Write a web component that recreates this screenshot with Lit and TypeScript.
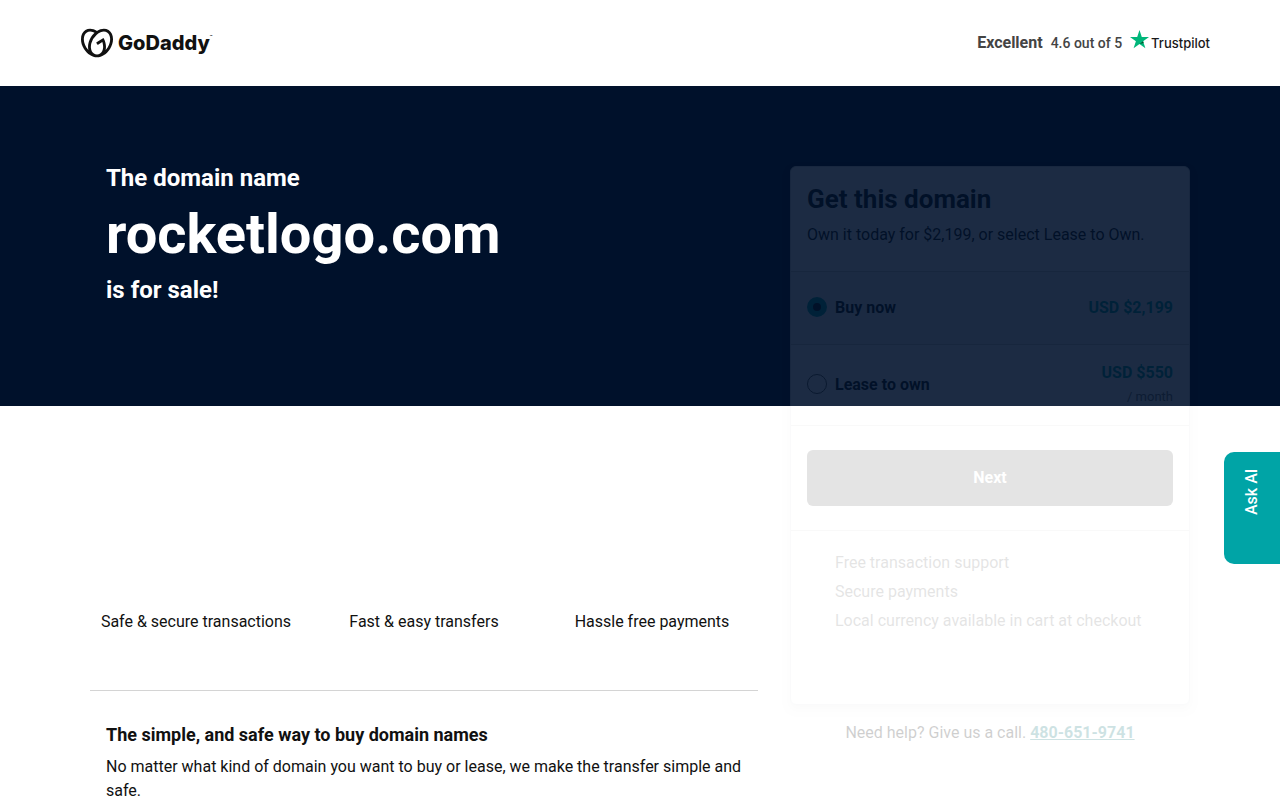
import { LitElement, html, css } from "lit";
import { customElement, state } from "lit/decorators.js";

@customElement("app-root")
export class AppRoot extends LitElement {
  @state() private plan = "buy";

  static styles = css`
    :host {
      display: block;
      font-family: Roboto, "Liberation Sans", sans-serif;
      font-size: 16px;
      line-height: 24px;
      color: #111;
      background: #fff;
    }
    * { box-sizing: border-box; }
    h1, h2, h3, p, ul, fieldset { margin: 0; padding: 0; border: 0; }
    ul { list-style: none; }

    .header {
      display: flex;
      justify-content: space-between;
      align-items: center;
      height: 86px;
      padding: 0 70px 0 81px;
    }
    .brand {
      display: flex;
      align-items: center;
      gap: 5px;
      color: #111;
      text-decoration: none;
    }
    .brand svg { display: block; width: 32px; height: 32px; }
    .wordmark {
      display: flex;
      font-family: Inter, sans-serif;
      font-weight: 800;
      font-size: 20px;
      line-height: 28px;
    }
    .tm { font-size: 4px; line-height: 16px; }
    .rating {
      display: flex;
      align-items: center;
      gap: 8px;
      color: #444;
    }
    .score { font-size: 14px; font-weight: 500; }
    .trust {
      display: flex;
      align-items: center;
      font-family: Inter, sans-serif;
      font-size: 13px;
      font-weight: 500;
      color: #191919;
      text-decoration: none;
    }
    .trust svg { display: block; width: 21px; height: 26px; }

    .main {
      background: linear-gradient(#00112b 320px, transparent 320px);
      padding: 80px 24px 0;
    }
    .columns {
      display: grid;
      grid-template-columns: minmax(0, 1fr) 400px;
      gap: 32px;
      max-width: 1100px;
      margin: 0 auto;
    }

    .hero {
      display: grid;
      gap: 8px;
      min-height: 240px;
      align-content: start;
      padding: 0 16px;
      color: #fff;
      font-weight: 700;
      font-size: 24px;
      line-height: 24px;
    }
    .domain { font-size: 56px; line-height: 72px; }
    .features {
      display: grid;
      grid-template-columns: repeat(3, 1fr);
      margin: 0 -8px;
      padding: 204px 0 56px;
      text-align: center;
    }
    .about {
      display: grid;
      gap: 8px;
      border-top: 1px solid #d4d4d4;
      padding: 32px 16px 24px;
    }
    .about h2 { font-size: 18px; line-height: 24px; }

    .card {
      border: 1px solid #d4dbe0;
      border-radius: 6px;
      background: #fff;
      box-shadow: 0 4px 8px rgba(0, 0, 0, 0.15);
      opacity: 0.11;
    }
    .intro { padding: 16px 16px 24px; }
    .intro h2 { font-size: 26px; line-height: 32px; margin-bottom: 8px; }
    .option {
      display: flex;
      align-items: center;
      gap: 8px;
      border-top: 1px solid #ccc;
      padding: 16px;
      min-height: 73px;
      font-weight: 700;
    }
    .option.picked { background: #f6f6fb; }
    .option input {
      appearance: none;
      width: 20px;
      height: 20px;
      margin: 0 0 2px;
      border: 1px solid #555;
      border-radius: 50%;
    }
    .option input:checked {
      border: 6px solid #00a4a6;
      background: #111;
    }
    .price { margin-left: auto; text-align: right; color: #00a4a6; }
    .month {
      display: block;
      font-size: 13px;
      font-weight: 400;
      color: #767676;
    }
    .action {
      border: solid #ccc;
      border-width: 1px 0;
      padding: 24px 16px;
    }
    .next {
      display: block;
      width: 100%;
      height: 56px;
      border: 0;
      border-radius: 6px;
      background: #111;
      color: #fff;
      font: 700 16px/24px Roboto, sans-serif;
    }
    .perks {
      display: grid;
      gap: 5px;
      padding: 20px 16px 71px 44px;
    }
    .help {
      padding-top: 16px;
      text-align: center;
      opacity: 0.2;
    }
    .help a { color: #09757a; font-weight: 700; }

    .ask {
      position: fixed;
      right: 0;
      top: 452px;
      width: 56px;
      height: 112px;
      border: 0;
      border-radius: 10px 0 0 10px;
      padding: 17px 16px;
      display: flex;
      background: #00a4a6;
      color: #fff;
      font: 500 16px/24px Roboto, sans-serif;
      text-align: end;
    }
    .ask span { writing-mode: vertical-rl; transform: rotate(180deg); }
  `;

  private option(id: string, label: string, price: string, note = "") {
    const picked = this.plan === id;
    return html`
      <label class="option ${picked ? "picked" : ""}">
        <input type="radio" name="plan" .checked=${picked} @change=${() => (this.plan = id)} />
        <span>${label}</span>
        <span class="price">${price}${note ? html`<span class="month">${note}</span>` : ""}</span>
      </label>
    `;
  }

  render() {
    return html`
      <header class="header">
        <a class="brand" href="#">
          <svg viewBox="0 0 24 24" aria-hidden="true" fill="currentColor">
            <path d="M20.702 2.29c-2.494-1.554-5.778-1.187-8.706.654C9.076 1.104 5.79.736 3.3 2.29c-3.941 2.463-4.42 8.806-1.07 14.167 2.47 3.954 6.333 6.269 9.77 6.226 3.439.043 7.301-2.273 9.771-6.226 3.347-5.361 2.872-11.704-1.069-14.167zM4.042 15.328a12.838 12.838 0 01-1.546-3.541 10.12 10.12 0 01-.336-3.338c.15-1.98.956-3.524 2.27-4.345 1.315-.822 3.052-.87 4.903-.137.281.113.556.24.825.382A15.11 15.11 0 007.5 7.54c-2.035 3.255-2.655 6.878-1.945 9.765a13.247 13.247 0 01-1.514-1.98zm17.465-3.541a12.866 12.866 0 01-1.547 3.54 13.25 13.25 0 01-1.513 1.984c.635-2.589.203-5.76-1.353-8.734a.39.39 0 00-.563-.153l-4.852 3.032a.397.397 0 00-.126.546l.712 1.139a.395.395 0 00.547.126l3.145-1.965c.101.306.203.606.28.916.296 1.086.41 2.214.335 3.337-.15 1.982-.956 3.525-2.27 4.347a4.437 4.437 0 01-2.25.65h-.101a4.432 4.432 0 01-2.25-.65c-1.314-.822-2.121-2.365-2.27-4.347-.074-1.123.039-2.251.335-3.337a13.212 13.212 0 014.05-6.482 10.148 10.148 0 012.849-1.765c1.845-.733 3.586-.685 4.9.137 1.316.822 2.122 2.365 2.271 4.345a10.146 10.146 0 01-.33 3.334z" />
          </svg>
          <span class="wordmark">GoDaddy<span class="tm">™</span></span>
        </a>
        <div class="rating">
          <strong>Excellent</strong>
          <span class="score">4.6 out of 5</span>
          <a class="trust" href="#">
            <svg viewBox="0 0 21 26" aria-hidden="true">
              <path fill="#00b67a" d="M9.500 0l2.300 7H19l-5.900 4.300 2.300 7-5.900-4.300-5.900 4.300 2.300-7L0 7h7.200z" />
              <path fill="#005128" d="M13.600 12.900l-.5-1.600L9.500 14z" />
            </svg>
            <span>Trustpilot</span>
          </a>
        </div>
      </header>
      <main class="main">
        <div class="columns">
          <div>
            <h1 class="hero">
              <span>The domain name</span>
              <span class="domain">rocketlogo.com</span>
              <span>is for sale!</span>
            </h1>
            <ul class="features">
              <li>Safe &amp; secure transactions</li>
              <li>Fast &amp; easy transfers</li>
              <li>Hassle free payments</li>
            </ul>
            <section class="about">
              <h2>The simple, and safe way to buy domain names</h2>
              <p>No matter what kind of domain you want to buy or lease, we make the transfer simple and safe.</p>
            </section>
          </div>
          <aside>
            <div class="card">
              <div class="intro">
                <h2>Get this domain</h2>
                <p>Own it today for $2,199, or select Lease to Own.</p>
              </div>
              <fieldset aria-label="Payment plan">
                ${this.option("buy", "Buy now", "USD $2,199")}
                ${this.option("lease", "Lease to own", "USD $550", "/ month")}
              </fieldset>
              <div class="action"><button class="next" type="button">Next</button></div>
              <ul class="perks">
                <li>Free transaction support</li>
                <li>Secure payments</li>
                <li>Local currency available in cart at checkout</li>
              </ul>
            </div>
            <p class="help">Need help? Give us a call. <a href="tel:4806519741">480-651-9741</a></p>
          </aside>
        </div>
      </main>
      <button class="ask" type="button"><span>Ask AI</span></button>
    `;
  }
}
